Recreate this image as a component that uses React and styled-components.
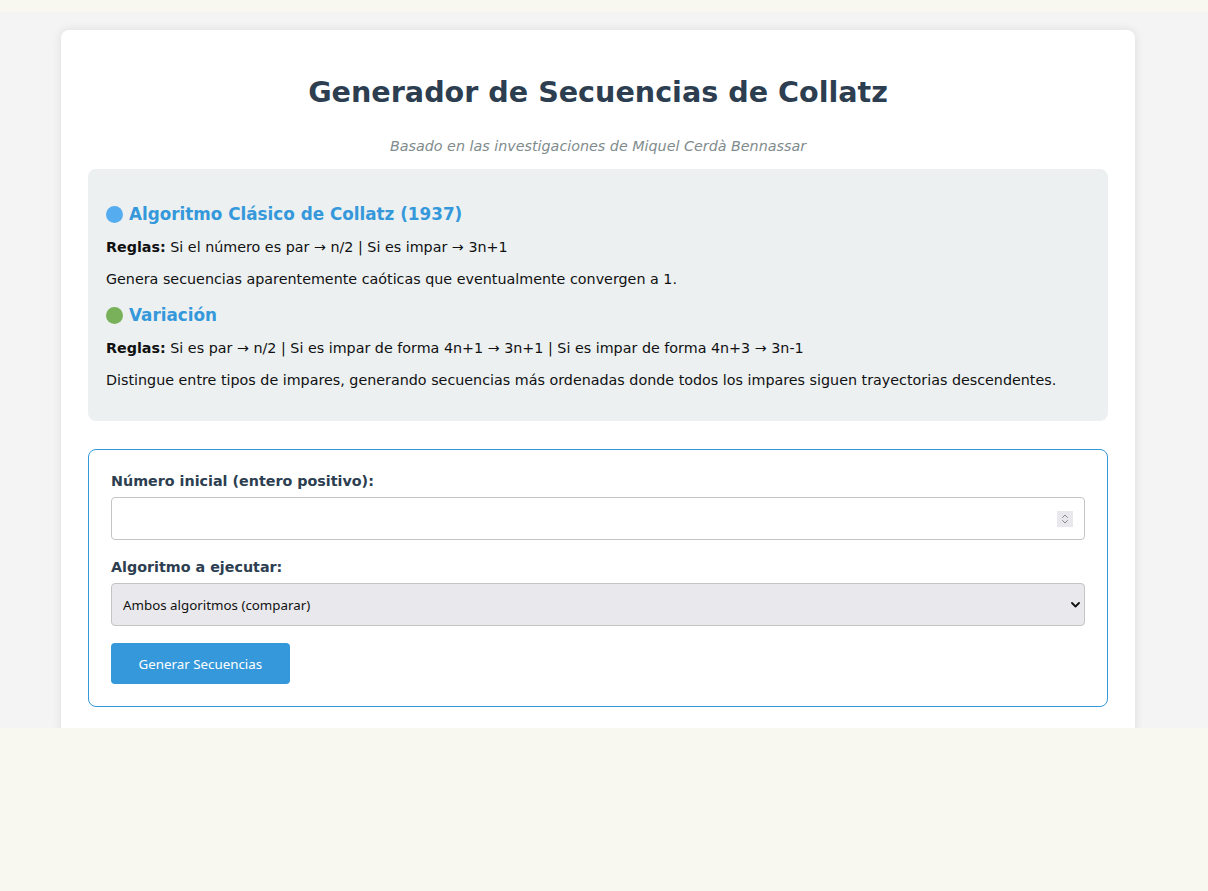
import styled, { createGlobalStyle } from "styled-components"

const GlobalStyle = createGlobalStyle`
    html, body {
        margin: 0;
        padding: 0;
        background: #f8f8f0;
    }
    body {
        font-family: "DejaVu Sans", sans-serif;
        color: #222;
    }
    * {
        box-sizing: border-box;
    }
`

export default function App() {
    return (
        <>
            <GlobalStyle />
            <Page>
                <Card>
                    <Title>Generador de Secuencias de Collatz</Title>
                    <Subtitle>Basado en las investigaciones de Miquel Cerdà Bennassar</Subtitle>

                    <InfoBox>
                        <AlgoTitle>
                            <Dot color="#55acee" />
                            Algoritmo Clásico de Collatz (1937)
                        </AlgoTitle>
                        <Text><b>Reglas:</b> Si el número es par → n/2 | Si es impar → 3n+1</Text>
                        <Text>Genera secuencias aparentemente caóticas que eventualmente convergen a 1.</Text>

                        <AlgoTitle>
                            <Dot color="#78b159" />
                            Variación
                        </AlgoTitle>
                        <Text><b>Reglas:</b> Si es par → n/2 | Si es impar de forma 4n+1 → 3n+1 | Si es impar de forma 4n+3 → 3n-1</Text>
                        <Text>Distingue entre tipos de impares, generando secuencias más ordenadas donde todos los impares siguen trayectorias descendentes.</Text>
                    </InfoBox>

                    <Form>
                        <Label htmlFor="numero">Número inicial (entero positivo):</Label>
                        <Field $gap={19}>
                            <NumberInput id="numero" type="number" min="1" />
                            <Spinner>
                                <svg width="8" height="12" viewBox="0 0 8 12" fill="none" stroke="#8a8a8a" strokeWidth="1" strokeLinecap="round" strokeLinejoin="round">
                                    <path d="M1.5 4.5 L4 2 L6.5 4.5" />
                                    <path d="M1.5 7.5 L4 10 L6.5 7.5" />
                                </svg>
                            </Spinner>
                        </Field>

                        <Label htmlFor="algoritmo">Algoritmo a ejecutar:</Label>
                        <Field $gap={17}>
                            <Select id="algoritmo" defaultValue="ambos">
                                <option value="ambos">Ambos algoritmos (comparar)</option>
                                <option value="clasico">Algoritmo clásico</option>
                                <option value="variacion">Variación</option>
                            </Select>
                            <Chevron width="9" height="6" viewBox="0 0 9 6" fill="none" stroke="#111" strokeWidth="1.8" strokeLinecap="round" strokeLinejoin="round">
                                <path d="M1 1 L4.5 4.5 L8 1" />
                            </Chevron>
                        </Field>

                        <Button>Generar Secuencias</Button>
                    </Form>
                </Card>
            </Page>
        </>
    )
}

const Page = styled.div`
    margin-top: 12px;
    height: 716px;
    overflow: hidden;
    background: #f4f4f4;
    padding-top: 18px;
`

const Card = styled.div`
    width: 1074px;
    margin-left: 61px;
    background: #fff;
    border-radius: 8px;
    box-shadow: 0 0 10px rgba(0, 0, 0, 0.1);
    padding: 27px 27px 30px;
`

const Title = styled.h1`
    margin: 18px 0 0;
    text-align: center;
    font-size: 28.6px;
    line-height: 34px;
    color: #2c3e50;
`

const Subtitle = styled.p`
    margin: 29px 0 15px;
    text-align: center;
    font-style: italic;
    font-size: 14.3px;
    line-height: 16px;
    color: #7f8c8d;
`

const InfoBox = styled.div`
    background: #ecf0f1;
    border-radius: 8px;
    padding: 16px 18px 18px;
`

const AlgoTitle = styled.h3`
    display: flex;
    align-items: center;
    gap: 6px;
    margin: 18px 0 13px;
    font-size: 16.8px;
    line-height: 22px;
    color: #3498db;

    & + p {
        margin-top: 0;
    }
`

const Dot = styled.span`
    width: 17px;
    height: 17px;
    border-radius: 50%;
    background: ${(p) => p.color};
    flex-shrink: 0;
`

const Text = styled.p`
    margin: 14px 0;
    font-size: 14.3px;
    line-height: 18px;
    color: #111;

    & + h3 {
        margin-top: 16px;
    }
`

const Form = styled.div`
    margin-top: 28px;
    border: 1px solid #3498db;
    border-radius: 8px;
    padding: 23px 22px 22px;
    display: flex;
    flex-direction: column;
    align-items: flex-start;
`

const Label = styled.label`
    font-weight: bold;
    font-size: 14.3px;
    line-height: 16px;
    color: #2c3e50;
    margin-bottom: 8px;
`

const Field = styled.div`
    position: relative;
    width: 100%;
    margin-bottom: ${(p) => p.$gap}px;
`

const NumberInput = styled.input`
    display: block;
    width: 100%;
    height: 43px;
    padding: 10px;
    border: 1px solid #c4c4c4;
    border-radius: 4px;
    background: #fff;
    appearance: textfield;

    &::-webkit-inner-spin-button,
    &::-webkit-outer-spin-button {
        -webkit-appearance: none;
        margin: 0;
    }
`

const Spinner = styled.span`
    position: absolute;
    right: 12px;
    top: 14px;
    width: 16px;
    height: 16px;
    background: #e9e9ed;
    display: flex;
    align-items: center;
    justify-content: center;
    pointer-events: none;
`

const Select = styled.select`
    display: block;
    width: 100%;
    height: 43px;
    padding: 0 30px 0 11px;
    border: 1px solid #c4c4c4;
    border-radius: 4px;
    background: #e9e9ed;
    color: #111;
    font-family: "Noto Sans", sans-serif;
    font-size: 13.33px;
    appearance: none;
`

const Chevron = styled.svg`
    position: absolute;
    right: 5px;
    top: 19px;
    pointer-events: none;
`

const Button = styled.button`
    background: #3498db;
    color: #fff;
    border: none;
    border-radius: 4px;
    padding: 0 27.5px;
    height: 41px;
    font-family: "Noto Sans", sans-serif;
    font-size: 13.33px;
    cursor: pointer;
`
